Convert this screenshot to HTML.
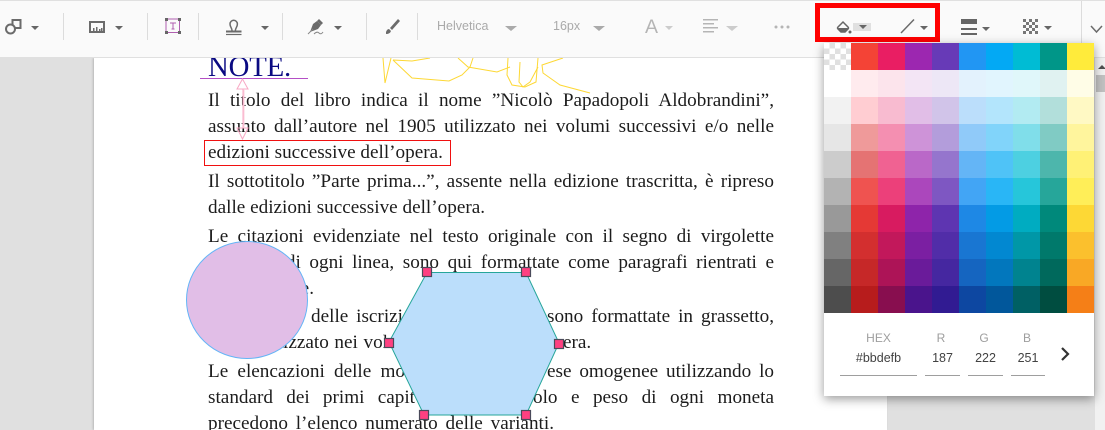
<!DOCTYPE html>
<html><head><meta charset="utf-8">
<style>
html,body{margin:0;padding:0;width:1105px;height:430px;overflow:hidden}
#root{position:absolute;left:0;top:0;width:1105px;height:430px;overflow:hidden;background:#e0e0e0;font-family:"Liberation Sans",sans-serif}
#page{position:absolute;left:94px;top:58px;width:793px;height:372px;background:#fff;box-shadow:-1px 0 2px rgba(0,0,0,.18)}
#bar{position:absolute;left:0;top:0;width:1105px;height:58px;background:#fafafa;border-top:1px solid #e0e0e0;border-bottom:1px solid #e0e0e0;box-sizing:border-box}
.sep{position:absolute;top:12px;width:1px;height:27px;background:#dcdcdc}
.tri{position:absolute;width:0;height:0;border-left:4px solid transparent;border-right:4px solid transparent;border-top:4px solid #666}
.tl{position:absolute;left:208px;width:566px;font:19.2px/24px "Liberation Serif",serif;color:#1c1c1c;white-space:nowrap;text-align:justify;text-align-last:justify}
.lbl{position:absolute;font-size:12px;color:#9e9e9e;text-align:center}
.val{position:absolute;font-size:12.5px;color:#424242;text-align:center}
.ul{position:absolute;top:375px;height:1px;background:#9e9e9e}
#panel{position:absolute;left:824px;top:43px;width:270px;height:353px;background:#fff;box-shadow:0 3px 10px rgba(0,0,0,.4)}
#grid{display:grid;grid-template-columns:repeat(10,27px);grid-auto-rows:27px;width:270px}
#grid div{width:27px;height:27px}
</style></head><body>
<div id="root">
<div id="page"></div>

<div class="tl" style="top:89px">Il titolo del libro indica il nome ”Nicolò Papadopoli Aldobrandini”,</div>
<div class="tl" style="top:115px">assunto dall’autore nel 1905 utilizzato nei volumi successivi e/o nelle</div>
<div class="tl" style="top:141px;width:233px">edizioni successive dell’opera.</div>
<div class="tl" style="top:170px">Il sottotitolo ”Parte prima...”, assente nella edizione trascritta, è ripreso</div>
<div class="tl" style="top:196px;width:277px">dalle edizioni successive dell’opera.</div>
<div class="tl" style="top:225px">Le citazioni evidenziate nel testo originale con il segno di virgolette</div>
<div class="tl" style="top:251px">all’inizio di ogni linea, sono qui formattate come paragrafi rientrati e</div>
<div class="tl" style="top:277px;width:106px">in corsive.</div>
<div class="tl" style="top:305px;left:311px;width:92px">delle iscrizi</div>
<div class="tl" style="top:305px;left:547px;width:227px">sono formattate in grassetto,</div>
<div class="tl" style="top:331px;left:283px;width:105px">izzato nei vol</div>
<div class="tl" style="top:331px;left:563px;width:27px">era.</div>
<div class="tl" style="top:360px;width:197px">Le elencazioni delle mo</div>
<div class="tl" style="top:360px;left:547px;width:227px">ese omogenee utilizzando lo</div>
<div class="tl" style="top:386px;width:207px">standard dei primi capit</div>
<div class="tl" style="top:386px;left:533px;width:241px">olo e peso di ogni moneta</div>
<div class="tl" style="top:412px;width:346px">precedono l’elenco numerato delle varianti.</div>
<div style="position:absolute;left:208px;top:50px;font:28.8px/34px 'Liberation Serif',serif;color:#0a0a82;white-space:nowrap;letter-spacing:-.2px">NOTE.</div>

<svg width="1105" height="430" style="position:absolute;left:0;top:0">
<path d="M200 78.500H308" stroke="#b44fc6" stroke-width="1" fill="none"/>
<g fill="none" stroke="#f8a8c4" stroke-width="1"><path d="M243 89V128M242.500 79l-5.500 10h11zM242.500 139l-5.500-11h11z"/><path d="M244 89V128" stroke="#fbd0de"/></g>
<rect x="204.500" y="140.500" width="246" height="25" fill="none" stroke="#f01010" stroke-width="1"/>
<g fill="none" stroke="#fdd835" stroke-width="1">
<path d="M383 58L385 83L391 58"/>
<path d="M393 60L412 78L449 81L462 75L470 67L473 58"/>
<path d="M393 60L412 61L430 58"/>
<path d="M458 58L468 67L497 72L510 67"/>
<path d="M508 58L507 75L512 85L525 87L536 82L538 58"/>
<path d="M520 62L519 82L523 87L530 82L538 67"/>
<path d="M563 58L542 65L543 73L560 85L590 93"/>
</g>
<ellipse cx="247" cy="300" rx="60.500" ry="58.500" fill="#e1bee7" stroke="#64b5f6" stroke-width="1"/>
<path d="M427 272.500H526L559 343L526 415H424L389 342Z" fill="#bbdefb" stroke="#26a69a" stroke-width="1"/>
<g fill="#ff4081" stroke="#4a4a5a" stroke-width="1.200">
<rect x="422.500" y="267.500" width="9" height="9"/><rect x="521.500" y="267.500" width="9" height="9"/>
<rect x="384.500" y="338.500" width="9" height="9"/><rect x="554.500" y="339.500" width="9" height="9"/>
<rect x="419.500" y="410.500" width="9" height="9"/><rect x="521.500" y="410.500" width="9" height="9"/>
</g>
</svg>

<div id="bar">
<div class="sep" style="left:63px"></div><div class="sep" style="left:147px"></div><div class="sep" style="left:198px"></div><div class="sep" style="left:282px"></div><div class="sep" style="left:366px"></div><div class="sep" style="left:417px"></div>
<div class="sep" style="left:1081px;top:0;height:56px"></div>
<svg width="1105" height="56" style="position:absolute;left:0;top:0">
<g fill="none" stroke="#6b6b6b" stroke-width="2">
<rect x="12.500" y="19" width="8" height="8"/><circle cx="10.500" cy="28" r="4.500" fill="#fafafa"/>
<rect x="90" y="21" width="14" height="10"/>
</g>
<path d="M93 30v-3h1.500v3zM96 30v-4h1.500v4zM99 30v-2h1.500v2zM101 30v-3h1.500v3z" fill="#6b6b6b"/>
<rect x="166" y="18" width="13.500" height="13.500" fill="none" stroke="#b05fb0" stroke-width="1"/>
<g fill="#666"><rect x="165" y="17" width="3" height="3"/><rect x="178" y="17" width="3" height="3"/><rect x="165" y="30" width="3" height="3"/><rect x="178" y="30" width="3" height="3"/></g>
<path d="M170 22h6M173 22v6M171.500 28h3" stroke="#b05fb0" fill="none"/>
<path d="M232 29.500c0-2.500-2-3.500-2-6.500a3.700 3.700 0 017.400 0c0 3-2 4-2 6.500" fill="none" stroke="#6b6b6b" stroke-width="1.500"/>
<path d="M226 30.500h15.500" stroke="#6b6b6b" stroke-width="2"/><path d="M226 33.500h15.500" stroke="#6b6b6b" stroke-width="1.200"/>
<path d="M310 31l3-8 4-3 4 4-3 4z" fill="#6b6b6b"/><path d="M317 20l2-2 4 4-2 2" fill="#6b6b6b"/>
<path d="M308 33l5-5M314 33q3-3 5-1t4-1" stroke="#888" fill="none"/>
<path d="M386 31q1-3 3-3l2 2q-1 3-5 3zM390 27l8-9 2 2-8 9z" fill="#6b6b6b"/>
<g fill="#b5b5b5">
<rect x="703" y="18" width="15" height="1.500"/><rect x="703" y="22" width="11" height="1.500"/><rect x="703" y="26" width="15" height="1.500"/><rect x="703" y="30" width="11" height="1.500"/>
</g>
<g fill="#b5b5b5"><circle cx="776" cy="26" r="1.500"/><circle cx="782" cy="26" r="1.500"/><circle cx="788" cy="26" r="1.500"/></g>
<rect x="853" y="22" width="18" height="8" fill="#e0e0e0"/>
<path d="M838 26l5-5 5 5q1 1 0 2l-3 3h-4l-3-3q-1-1 0-2z" fill="#fafafa" stroke="#666" stroke-width="1.500"/><path d="M838 27h10l-3 4h-4z" fill="#666"/><circle cx="850" cy="31" r="1.500" fill="#666"/>
<path d="M901 32L914 18.500" stroke="#6b6b6b" stroke-width="1.500"/>
<g fill="#666"><rect x="961" y="18" width="16" height="5"/><rect x="961" y="27" width="16" height="2"/><rect x="961" y="32" width="16" height="2"/></g>
<g fill="#777"><rect x="1023" y="18" width="3" height="3"/><rect x="1029" y="18" width="3" height="3"/><rect x="1035" y="18" width="3" height="3"/><rect x="1026" y="21" width="3" height="3"/><rect x="1032" y="21" width="3" height="3"/><rect x="1023" y="24" width="3" height="3"/><rect x="1029" y="24" width="3" height="3"/><rect x="1035" y="24" width="3" height="3"/><rect x="1026" y="27" width="3" height="3"/><rect x="1032" y="27" width="3" height="3"/><rect x="1023" y="30" width="3" height="3"/><rect x="1029" y="30" width="3" height="3"/><rect x="1035" y="30" width="3" height="3"/></g>
<path d="M1091 25l5.500 6 5.500-6" stroke="#6b6b6b" stroke-width="1.500" fill="none"/>
</svg>
<div class="tri" style="left:31px;top:25px"></div><div class="tri" style="left:115px;top:25px"></div><div class="tri" style="left:261px;top:25px"></div><div class="tri" style="left:334px;top:25px"></div>
<div class="tri" style="left:859px;top:24px"></div><div class="tri" style="left:920px;top:25px"></div><div class="tri" style="left:982px;top:26px"></div><div class="tri" style="left:1044px;top:25px"></div>
<div style="position:absolute;left:437px;top:18px;font-size:12.500px;color:#aaa">Helvetica</div>
<div style="position:absolute;left:553px;top:18px;font-size:12.500px;color:#aaa">16px</div>
<div style="position:absolute;left:645px;top:15px;font-size:19.500px;color:#b5b5b5">A</div>
<div class="tri" style="left:505px;top:25px;border-left-width:6px;border-right-width:6px;border-top:5px solid #aaa"></div>
<div class="tri" style="left:593px;top:25px;border-left-width:6px;border-right-width:6px;border-top:5px solid #aaa"></div>
<div class="tri" style="left:665px;top:25px;border-top-color:#ccc"></div>
<div class="tri" style="left:726px;top:25px;border-left-width:6px;border-right-width:6px;border-top:5px solid #ccc"></div>
</div>

<div style="position:absolute;left:815px;top:3px;width:125px;height:39px;box-sizing:border-box;border:5px solid #f00"></div>

<div style="position:absolute;left:1095px;top:58px;width:10px;height:372px;background:#f1f1f1"></div>
<div style="position:absolute;left:1096px;top:75px;width:9px;height:17px;background:#c1c1c1"></div>
<div class="tri" style="left:1098px;top:65px;border-top:0;border-bottom:4px solid #505050"></div>

<div id="panel">
<div id="grid">
<div style="background:repeating-conic-gradient(#e0e0e0 0 25%,#fff 0 50%) 0 0/11px 11px"></div><div style="background:#f44336"></div><div style="background:#e91e63"></div><div style="background:#9c27b0"></div><div style="background:#673ab7"></div><div style="background:#2196f3"></div><div style="background:#03a9f4"></div><div style="background:#00bcd4"></div><div style="background:#009688"></div><div style="background:#ffeb3b"></div>
<div style="background:#fff"></div><div style="background:#ffebee"></div><div style="background:#fce4ec"></div><div style="background:#f3e5f5"></div><div style="background:#ede7f6"></div><div style="background:#e3f2fd"></div><div style="background:#e1f5fe"></div><div style="background:#e0f7fa"></div><div style="background:#e0f2f1"></div><div style="background:#fffde7"></div>
<div style="background:#f2f2f2"></div><div style="background:#ffcdd2"></div><div style="background:#f8bbd0"></div><div style="background:#e1bee7"></div><div style="background:#d1c4e9"></div><div style="background:#bbdefb"></div><div style="background:#b3e5fc"></div><div style="background:#b2ebf2"></div><div style="background:#b2dfdb"></div><div style="background:#fff9c4"></div>
<div style="background:#e6e6e6"></div><div style="background:#ef9a9a"></div><div style="background:#f48fb1"></div><div style="background:#ce93d8"></div><div style="background:#b39ddb"></div><div style="background:#90caf9"></div><div style="background:#81d4fa"></div><div style="background:#80deea"></div><div style="background:#80cbc4"></div><div style="background:#fff59d"></div>
<div style="background:#ccc"></div><div style="background:#e57373"></div><div style="background:#f06292"></div><div style="background:#ba68c8"></div><div style="background:#9575cd"></div><div style="background:#64b5f6"></div><div style="background:#4fc3f7"></div><div style="background:#4dd0e1"></div><div style="background:#4db6ac"></div><div style="background:#fff176"></div>
<div style="background:#b3b3b3"></div><div style="background:#ef5350"></div><div style="background:#ec407a"></div><div style="background:#ab47bc"></div><div style="background:#7e57c2"></div><div style="background:#42a5f5"></div><div style="background:#29b6f6"></div><div style="background:#26c6da"></div><div style="background:#26a69a"></div><div style="background:#ffee58"></div>
<div style="background:#999"></div><div style="background:#e53935"></div><div style="background:#d81b60"></div><div style="background:#8e24aa"></div><div style="background:#5e35b1"></div><div style="background:#1e88e5"></div><div style="background:#039be5"></div><div style="background:#00acc1"></div><div style="background:#00897b"></div><div style="background:#fdd835"></div>
<div style="background:#808080"></div><div style="background:#d32f2f"></div><div style="background:#c2185b"></div><div style="background:#7b1fa2"></div><div style="background:#512da8"></div><div style="background:#1976d2"></div><div style="background:#0288d1"></div><div style="background:#0097a7"></div><div style="background:#00796b"></div><div style="background:#fbc02d"></div>
<div style="background:#666"></div><div style="background:#c62828"></div><div style="background:#ad1457"></div><div style="background:#6a1b9a"></div><div style="background:#4527a0"></div><div style="background:#1565c0"></div><div style="background:#0277bd"></div><div style="background:#00838f"></div><div style="background:#00695c"></div><div style="background:#f9a825"></div>
<div style="background:#4d4d4d"></div><div style="background:#b71c1c"></div><div style="background:#880e4f"></div><div style="background:#4a148c"></div><div style="background:#311b92"></div><div style="background:#0d47a1"></div><div style="background:#01579b"></div><div style="background:#006064"></div><div style="background:#004d40"></div><div style="background:#f57f17"></div>
</div>
</div>
<div class="lbl" style="left:840px;top:331px;width:77px">HEX</div>
<div class="lbl" style="left:925px;top:331px;width:32px">R</div>
<div class="lbl" style="left:968px;top:331px;width:32px">G</div>
<div class="lbl" style="left:1011px;top:331px;width:32px">B</div>
<div class="val" style="left:840px;top:351px;width:77px">#bbdefb</div>
<div class="val" style="left:925px;top:351px;width:35px">187</div>
<div class="val" style="left:968px;top:351px;width:35px">222</div>
<div class="val" style="left:1011px;top:351px;width:34px">251</div>
<div class="ul" style="left:840px;width:77px"></div><div class="ul" style="left:925px;width:35px"></div><div class="ul" style="left:968px;width:35px"></div><div class="ul" style="left:1011px;width:34px"></div>
<svg width="12" height="16" style="position:absolute;left:1060px;top:346px"><path d="M2 2l6 6-6 6" fill="none" stroke="#333" stroke-width="2.200"/></svg>
</div>
</body></html>
